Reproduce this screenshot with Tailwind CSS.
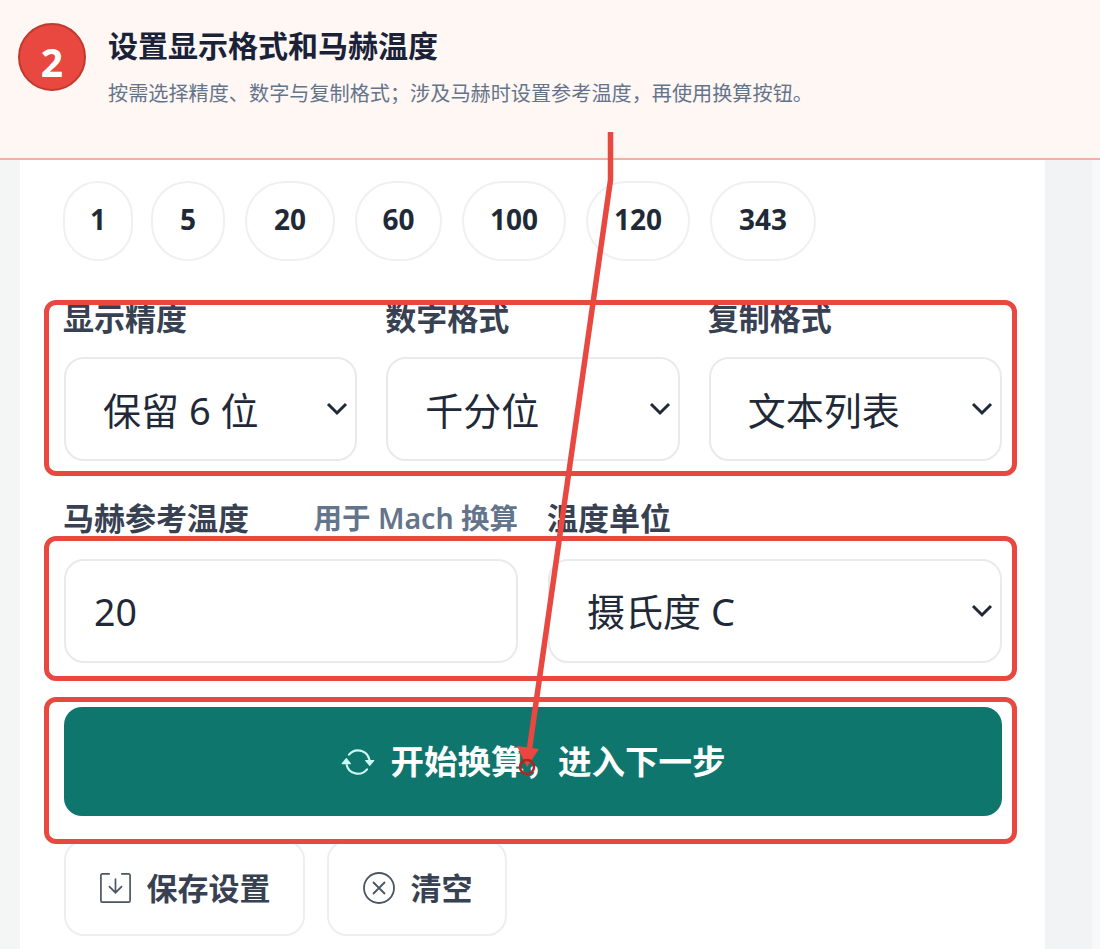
<!DOCTYPE html>
<html lang="zh-CN">
<head>
    <meta charset="UTF-8">
    <title>设置显示格式和马赫温度</title>
    <script src="https://cdn.jsdelivr.net/npm/@tailwindcss/browser@4"></script>
</head>
<body class="bg-[#f8f9fa] font-['Noto_Sans','Noto_Sans_CJK_SC',sans-serif] text-[#1f2937]">
    <div class="relative h-[949px] w-[1100px] overflow-hidden">

        <!-- step banner -->
        <div class="flex h-[160px] items-start border-b-2 border-[#f5b0a5] bg-[#fff7f4] pl-[18px] pt-[23px]">
            <div class="flex h-[68px] w-[68px] shrink-0 items-center justify-center rounded-full border-2 border-[#c0392b] bg-[#e8483f] pt-[9px] text-[39px] font-bold leading-none text-white">2</div>
            <div class="ml-[22px]">
                <h1 class="text-[30px] font-bold leading-[46px] text-[#1a2238]">设置显示格式和马赫温度</h1>
                <p class="mt-[1px] text-[20.15px] leading-[46px] text-[#64748b]">按需选择精度、数字与复制格式；涉及马赫时设置参考温度，再使用换算按钮。</p>
            </div>
        </div>

        <div class="flex h-[789px]">
            <div class="w-[20px] bg-[#f4f6f6]"></div>
            <!-- card -->
            <div class="w-[1025px] bg-white pl-[44px] pr-[43px] pt-[21px]">
                <div class="-ml-px flex gap-[20px]">
                    <button class="h-[80px] w-[70px] rounded-full border-2 border-[#eef0f3] pb-[5px] text-[28px] font-bold text-[#1f2937]">1</button>
                    <button class="-ml-[2px] h-[80px] w-[74px] rounded-full border-2 border-[#eef0f3] pb-[5px] text-[28px] font-bold text-[#1f2937]">5</button>
                    <button class="h-[80px] w-[90px] rounded-full border-2 border-[#eef0f3] pb-[5px] text-[28px] font-bold text-[#1f2937]">20</button>
                    <button class="h-[80px] w-[87px] rounded-full border-2 border-[#eef0f3] pb-[5px] text-[28px] font-bold text-[#1f2937]">60</button>
                    <button class="h-[80px] w-[104px] rounded-full border-2 border-[#eef0f3] pb-[5px] text-[28px] font-bold text-[#1f2937]">100</button>
                    <button class="h-[80px] w-[104px] rounded-full border-2 border-[#eef0f3] pb-[5px] text-[28px] font-bold text-[#1f2937]">120</button>
                    <button class="h-[80px] w-[106px] rounded-full border-2 border-[#eef0f3] pb-[5px] text-[28px] font-bold text-[#1f2937]">343</button>
                </div>

                <div class="mt-[37px] grid grid-cols-3 gap-x-[29px]">
                    <div>
                        <div class="-ml-px mb-[19px] h-[40px] text-[31px] font-bold leading-[40px] text-[#374151]">显示精度</div>
                        <div class="relative">
                            <select class="h-[104px] w-full appearance-none rounded-[20px] border-2 border-[#e8eaed] bg-white pl-[37px] pt-[3px] text-[38px]"><option>保留 6 位</option></select>
                            <svg class="absolute right-[9px] top-[45px] h-[14px] w-[22px]" viewBox="0 0 22 14" fill="none" stroke="#1f2937" stroke-width="3"><path d="M2 2l9 9 9-9"/></svg>
                        </div>
                    </div>
                    <div>
                        <div class="-ml-px mb-[19px] h-[40px] text-[31px] font-bold leading-[40px] text-[#374151]">数字格式</div>
                        <div class="relative">
                            <select class="h-[104px] w-full appearance-none rounded-[20px] border-2 border-[#e8eaed] bg-white pl-[37px] pt-[3px] text-[38px]"><option>千分位</option></select>
                            <svg class="absolute right-[9px] top-[45px] h-[14px] w-[22px]" viewBox="0 0 22 14" fill="none" stroke="#1f2937" stroke-width="3"><path d="M2 2l9 9 9-9"/></svg>
                        </div>
                    </div>
                    <div>
                        <div class="-ml-px mb-[19px] h-[40px] text-[31px] font-bold leading-[40px] text-[#374151]">复制格式</div>
                        <div class="relative">
                            <select class="h-[104px] w-full appearance-none rounded-[20px] border-2 border-[#e8eaed] bg-white pl-[37px] pt-[3px] text-[38px]"><option>文本列表</option></select>
                            <svg class="absolute right-[9px] top-[45px] h-[14px] w-[22px]" viewBox="0 0 22 14" fill="none" stroke="#1f2937" stroke-width="3"><path d="M2 2l9 9 9-9"/></svg>
                        </div>
                    </div>
                </div>

                <div class="mt-[37px] grid grid-cols-2 gap-x-[30px]">
                    <div>
                        <div class="-ml-px mb-[21px] flex h-[40px] items-center justify-between">
                            <span class="text-[31px] font-bold leading-[40px] text-[#374151]">马赫参考温度</span>
                            <span class="text-[28.5px] font-semibold leading-[40px] text-[#64748b]">用于 Mach 换算</span>
                        </div>
                        <input class="h-[104px] w-full rounded-[20px] border-2 border-[#e8eaed] bg-white pl-[28px] text-[37.5px]" value="20">
                    </div>
                    <div>
                        <div class="-ml-px mb-[21px] h-[40px] text-[31px] font-bold leading-[40px] text-[#374151]">温度单位</div>
                        <div class="relative">
                            <select class="h-[104px] w-full appearance-none rounded-[20px] border-2 border-[#e8eaed] bg-white pl-[37px] text-[38px]"><option>摄氏度 C</option></select>
                            <svg class="absolute right-[9px] top-[45px] h-[14px] w-[22px]" viewBox="0 0 22 14" fill="none" stroke="#1f2937" stroke-width="3"><path d="M2 2l9 9 9-9"/></svg>
                        </div>
                    </div>
                </div>

                <button class="mt-[44px] flex h-[109px] w-full items-center justify-center gap-[16px] rounded-[18px] bg-[#0f766e] text-[33.5px] font-bold text-white">
                    <svg class="h-[34px] w-[34px]" viewBox="0 0 16 16" fill="#ccfbf1"><path d="M11.534 7h3.932a.25.25 0 0 1 .192.41l-1.966 2.36a.25.25 0 0 1-.384 0l-1.966-2.36a.25.25 0 0 1 .192-.41zm-11 2h3.932a.25.25 0 0 0 .192-.41L2.692 6.23a.25.25 0 0 0-.384 0L.342 8.59A.25.25 0 0 0 .534 9z"/><path d="M8 3c-1.552 0-2.94.707-3.857 1.818a.5.5 0 1 1-.771-.636A6.002 6.002 0 0 1 13.917 7H12.9A5.002 5.002 0 0 0 8 3zM3.100 9a5.002 5.002 0 0 0 8.757 2.182.5.5 0 1 1 .771.636A6.002 6.002 0 0 1 2.083 9H3.100z"/></svg>
                    <span>开始换算，进入下一步</span>
                </button>

                <div class="mt-[24px] flex gap-[22px]">
                    <button class="flex h-[96px] w-[241px] items-center justify-center gap-[15px] rounded-[20px] border-2 border-[#eceef1] bg-white text-[31px] font-bold text-[#374151]">
                        <svg class="h-[32px] w-[33px]" viewBox="0 0 34 34" fill="none" stroke="#4b5563" stroke-width="1.800"><path d="M11 2H3a1.500 1.500 0 0 0-1.500 1.500v27A1.500 1.500 0 0 0 3 32h28a1.500 1.500 0 0 0 1.500-1.500v-27A1.500 1.500 0 0 0 31 2h-8"/><path d="M17 7v15M10 15l7 7 7-7"/></svg>
                        <span>保存设置</span>
                    </button>
                    <button class="flex h-[96px] w-[180px] items-center justify-center gap-[15px] rounded-[20px] border-2 border-[#eceef1] bg-white text-[31px] font-bold text-[#374151]">
                        <svg class="h-[34px] w-[34px]" viewBox="0 0 34 34" fill="none" stroke="#4b5563" stroke-width="1.800"><circle cx="17" cy="17" r="15"/><path d="M11 11l12 12M23 11L11 23"/></svg>
                        <span>清空</span>
                    </button>
                </div>
            </div>
            <div class="w-[47px] bg-[#f1f3f5]"></div>
        </div>

        <!-- annotation overlay -->
        <div class="absolute left-[44px] top-[300px] h-[176px] w-[973px] rounded-[12px] border-[5px] border-[#e8483f]"></div>
        <div class="absolute left-[44px] top-[536px] h-[145px] w-[973px] rounded-[12px] border-[5px] border-[#e8483f]"></div>
        <div class="absolute left-[44px] top-[697px] h-[147px] w-[973px] rounded-[12px] border-[5px] border-[#e8483f]"></div>
        <svg class="absolute left-0 top-0 h-[949px] w-[1100px]" viewBox="0 0 1100 949" fill="none">
            <path d="M610.500 132V180L529 752" stroke="#e8483f" stroke-width="5.500"/>
            <path d="M517 746L539 749L527 767Z" fill="#e8483f"/>
            <circle cx="527" cy="767" r="7" stroke="#b8231f" stroke-width="2.500"/>
        </svg>
    </div>
</body>
</html>
